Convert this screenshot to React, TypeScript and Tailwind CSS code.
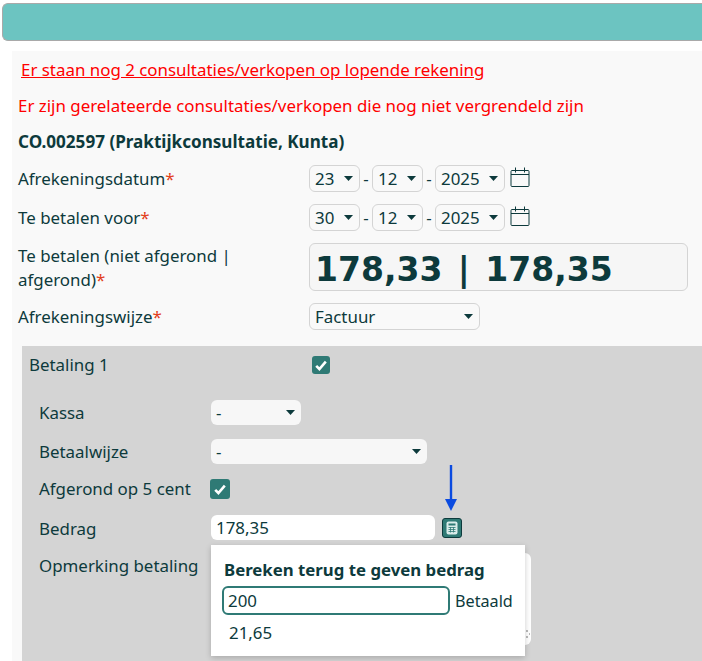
const Caret = () => (
  <svg width="9" height="5" viewBox="0 0 9 5" className="shrink-0">
    <path d="M0 0h9L4.5 5z" fill="#0d3a3c" />
  </svg>
);

const Req = () => <span className="text-[#e2401c]">*</span>;

const Select = ({
  value,
  className,
}: {
  value: string;
  className: string;
}) => (
  <div
    className={`flex h-[27px] items-center justify-between rounded-md border border-[#d4d4d4] pl-[5px] pr-[6px] ${className}`}
  >
    <span>{value}</span>
    <Caret />
  </div>
);

const GraySelect = ({ className }: { className: string }) => (
  <div
    className={`flex h-[25px] items-center justify-between rounded-md bg-[#f7f7f7] pl-[5px] pr-[6px] ${className}`}
  >
    <span>-</span>
    <Caret />
  </div>
);

const CalendarIcon = () => (
  <svg width="20" height="22" viewBox="0 0 20 22" fill="none" stroke="#0d3a3c" className="mb-[3px] ml-[5px]">
    <rect x="1" y="4.5" width="18" height="16" rx="1" />
    <path d="M1 8.5h18M5.5 1.5v5M14.5 1.5v5" />
  </svg>
);

const Check = ({ className }: { className: string }) => (
  <div className={`flex items-center justify-center rounded-[3px] bg-[#2f7a75] ${className}`}>
    <svg width="12" height="11" viewBox="0 0 12 11" fill="none" stroke="#fff" strokeWidth="2.6">
      <path d="M1.2 5.8 4.4 9 10.8 1.6" />
    </svg>
  </div>
);

const DateRow = ({ label, day }: { label: string; day: string }) => (
  <div className="flex items-center">
    <div className="w-[291px]">
      {label}
      <Req />
    </div>
    <Select value={day} className="w-[51px]" />
    <span className="w-[12px] text-center">-</span>
    <Select value="12" className="w-[51px]" />
    <span className="w-[12px] text-center">-</span>
    <Select value="2025" className="w-[70px]" />
    <CalendarIcon />
  </div>
);

const App = () => {
  return (
    <div className="h-[661px] w-[702px] overflow-hidden bg-white pl-[2px] pt-[3px] font-['Noto_Sans',sans-serif] text-[16.9px] leading-6 text-[#0d3a3c]">
      <div className="h-[38px] rounded-l-md rounded-r-none border border-r-0 border-[#a9a9a9] bg-[#6cc4c1]" />

      <div className="relative ml-[10px] mt-[10px] h-[610px] bg-[#f9f9f9] pl-[6px]">
        <div className="pl-[3px] pt-[7px] text-[red] underline">
          Er staan nog 2 consultaties/verkopen op lopende rekening
        </div>
        <div className="mt-[12px] text-[red]">
          Er zijn gerelateerde consultaties/verkopen die nog niet vergrendeld zijn
        </div>
        <div className="mt-[12px] text-[17.1px] font-bold">CO.002597 (Praktijkconsultatie, Kunta)</div>

        <div className="mt-[11px] flex flex-col gap-[12px]">
          <DateRow label="Afrekeningsdatum" day="23" />
          <DateRow label="Te betalen voor" day="30" />
        </div>

        <div className="mt-[12px] flex h-[48px] items-center">
          <div className="w-[291px] pt-[1px]">
            <div>Te betalen (niet afgerond |</div>
            <div>
              afgerond)
              <Req />
            </div>
          </div>
          <div className="flex h-[48px] w-[379px] items-center rounded-md border border-[#d4d4d4] bg-[#f6f6f6] pl-[5px] pt-[6px] font-['DejaVu_Sans',sans-serif] text-[33px] font-bold [word-spacing:4px]">
            178,33 | 178,35
          </div>
        </div>

        <div className="mt-[12px] flex items-center">
          <div className="w-[291px]">
            Afrekeningswijze
            <Req />
          </div>
          <Select value="Factuur" className="w-[171px]" />
        </div>

        <div className="relative ml-[4px] mt-[16px] h-[315px] bg-[#d4d4d4] pl-[7px] pt-[7px]">
          <div className="flex h-[24px] items-center">
            <div className="w-[283px]">Betaling 1</div>
            <Check className="size-[18px]" />
          </div>

          <div className="mt-[23px] flex flex-col pl-[10px]">
            <div className="flex h-[25px] items-center">
              <div className="w-[172px]">Kassa</div>
              <GraySelect className="w-[90px]" />
            </div>
            <div className="mt-[14px] flex h-[25px] items-center">
              <div className="w-[172px]">Betaalwijze</div>
              <GraySelect className="w-[216px]" />
            </div>
            <div className="mt-[15px] flex h-[20px] items-center">
              <div className="w-[171px]">Afgerond op 5 cent</div>
              <Check className="size-[20px]" />
            </div>
            <div className="mt-[16px] flex h-[25px] items-center">
              <div className="w-[172px] pt-[2px]">Bedrag</div>
              <div className="flex h-[25px] w-[224px] items-center rounded-md bg-white pl-[5px]">178,35</div>
              <div className="ml-[7px] flex size-[20px] items-center justify-center rounded-[3px] border border-[#0d3a3c] bg-[#2f7a75]">
                <svg width="12" height="14" viewBox="0 0 12 14">
                  <rect x="0.5" y="0.5" width="11" height="13" rx="2" fill="#d9ecea" />
                  <path d="M2.5 2.5h7v2h-7z" fill="#2f7a75" />
                  <path d="M2.5 6.5h7M2.5 8.5h7M2.5 10.5h7M4.5 6v5.5M7.5 6v5.5" stroke="#2f7a75" strokeWidth="0.8" />
                </svg>
              </div>
            </div>
            <div className="mt-[13px] flex">
              <div className="w-[172px] pt-[1px]">Opmerking betaling</div>
              <div className="h-[92px] w-[320px] rounded-md bg-white" />
            </div>
          </div>

          <div className="absolute left-[189px] top-[199px] z-10 h-[111px] w-[314px] bg-white pl-[11px] pt-[13px] shadow-[0_2px_6px_rgba(0,0,0,0.2)]">
            <div className="pl-[2px] text-[16.8px] font-bold">Bereken terug te geven bedrag</div>
            <div className="mt-[4px] flex items-center">
              <div className="flex h-[29px] w-[228px] items-center rounded-md border-2 border-[#2f7a75] pl-[4px]">200</div>
              <span className="ml-[5px] text-[16.2px]">Betaald</span>
            </div>
            <div className="ml-[7px] mt-[6px]">21,65</div>
          </div>

          <svg width="6" height="10" viewBox="0 0 6 10" className="absolute left-[503px] top-[283px]">
            <path d="M1 2h2M1 8h2M4 5h1" stroke="#777" strokeWidth="1" />
          </svg>

          <svg width="14" height="46" viewBox="0 0 14 46" className="absolute left-[422px] top-[119px]">
            <path d="M7 0v34" stroke="#0b4be0" strokeWidth="2.4" />
            <path d="M1 34h12L7 46z" fill="#0b4be0" />
          </svg>
        </div>
      </div>
    </div>
  );
};

export default App;
